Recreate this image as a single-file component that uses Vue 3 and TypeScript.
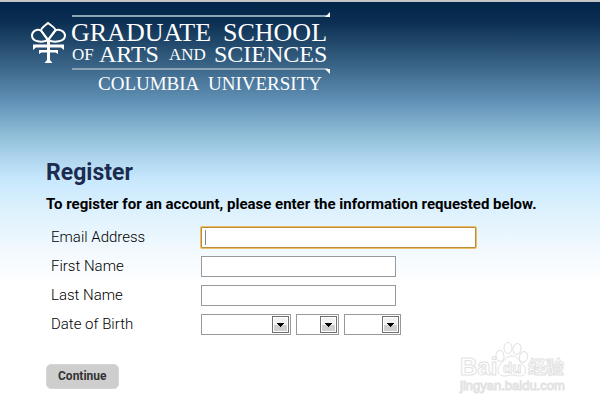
<script setup lang="ts">
import { ref } from 'vue'

interface DatePart {
  name: string
  size: string
  options: string[]
}

const email = ref('')
const firstName = ref('')
const lastName = ref('')

const range = (from: number, to: number): string[] =>
  Array.from({ length: to - from + 1 }, (_, i) => String(from + i))

const dateParts: DatePart[] = [
  { name: 'Month', size: 'month', options: range(1, 12) },
  { name: 'Day', size: 'day', options: range(1, 31) },
  { name: 'Year', size: 'year', options: range(1920, 2005) },
]
const birth = ref<string[]>(['', '', ''])
</script>

<template>
  <div class="page">
    <header class="banner">
      <svg class="logo" width="302" height="84" viewBox="30 12 302 84" role="img" aria-label="Graduate School of Arts and Sciences, Columbia University">
        <g class="crown">
          <path d="M48 40C42 43 32 42 32 35.500C32 31 37 28.500 41 30.500L48 40L55 30.500C59 28.500 65 31 65 35.500C65 42 54 43 48 40Z" />
          <path d="M41 30.500C41 28 45 25.500 48 23C51 25.500 56 28 55.500 30.500L48 40Z" />
        </g>
        <path class="solid" d="M33 44.500H64V50L61 47.500H50V50H58V54L55.500 52.500H50V60L52.500 63H44.500L47 60V52.500H41.500L39 54V50H47V47.500H36L33 50ZM47 39H50V45H47Z" />
        <path class="rule" d="M72 16H328M72 69H328" />
        <path class="solid" d="M330 12V17H325ZM325 69H330V74Z" />
        <g class="words">
          <text class="large" x="71" y="41">GRADUATE</text>
          <text class="large" x="223" y="41">SCHOOL</text>
          <text class="small" x="72" y="60">OF</text>
          <text class="medium" x="99" y="62">ARTS</text>
          <text class="small" x="169" y="60">AND</text>
          <text class="medium" x="214" y="62">SCIENCES</text>
          <text class="school" x="98" y="90">COLUMBIA</text>
          <text class="school" x="208" y="90">UNIVERSITY</text>
        </g>
      </svg>
    </header>

    <main>
      <h1>Register</h1>
      <p class="intro">To register for an account, please enter the information requested below.</p>
      <form @submit.prevent>
        <div class="row">
          <label for="email">Email Address</label>
          <input id="email" v-model="email" class="box active" type="text" />
        </div>
        <div class="row">
          <label for="first">First Name</label>
          <input id="first" v-model="firstName" class="box" type="text" />
        </div>
        <div class="row">
          <label for="last">Last Name</label>
          <input id="last" v-model="lastName" class="box" type="text" />
        </div>
        <div class="row">
          <label for="birth-0">Date of Birth</label>
          <div class="parts">
            <span v-for="(part, i) in dateParts" :key="part.name" class="picker" :class="part.size">
              <select :id="`birth-${i}`" v-model="birth[i]" :aria-label="part.name">
                <option value=""></option>
                <option v-for="o in part.options" :key="o" :value="o">{{ o }}</option>
              </select>
              <span class="arrow" aria-hidden="true">
                <svg width="7" height="4" viewBox="0 0 7 4" shape-rendering="crispEdges">
                  <path d="M0 0H7V1H6V2H5V3H4V4H3V3H2V2H1V1H0Z" />
                </svg>
              </span>
            </span>
          </div>
        </div>
        <button type="submit">Continue</button>
      </form>
    </main>

    <svg class="watermark" width="120" height="58" viewBox="456 340 120 58" aria-hidden="true">
      <g class="mark">
        <text class="brand" x="460" y="375">Bai</text>
        <ellipse cx="500" cy="356" rx="4" ry="5.500" transform="rotate(-10 500 356)" />
        <ellipse cx="508" cy="348" rx="4" ry="5.500" />
        <ellipse cx="517" cy="349" rx="4" ry="5.500" transform="rotate(12 517 349)" />
        <ellipse cx="523.500" cy="357" rx="4" ry="5.500" transform="rotate(15 523.500 357)" />
        <path d="M512 356C506 356 504 361 501 364C496 368 497 376 504 376C508 376 509 375 512 375C515 375 516 376 520 376C527 376 527 368 522 364C519 361 518 356 512 356Z" />
        <text class="du" x="503" y="373">du</text>
        <text class="cjk" x="528" y="374">经验</text>
        <text class="address" x="460" y="390">jingyan.baidu.com</text>
      </g>
    </svg>
  </div>
</template>

<style>
body {
  margin: 0;
  background: #fff;
}
</style>

<style scoped>
.page {
  position: relative;
  box-sizing: border-box;
  min-height: 100vh;
  border-top: 2px solid #c4c6c8;
  background: linear-gradient(#02244a 0, #0b2f52 20px, #2d5678 52px, #5f8fb4 98px, #8bbad5 130px, #a6cfe8 150px, #c6e7fd 176px, #daf0fd 204px, #f0f8fe 244px, #fff 282px) padding-box;
  color: #000;
  font: 300 15px/21px Roboto, "Liberation Sans", sans-serif;
}

.banner {
  padding: 10px 30px 0;
}

.logo {
  display: block;
}

.crown {
  fill: none;
  stroke: #fff;
  stroke-width: 2;
}

.solid,
.words {
  fill: #fff;
}

.rule {
  stroke: #8fa3b7;
  stroke-width: 2;
}

.words {
  font-family: "Liberation Serif", serif;
  font-weight: 400;
}

.large { font-size: 26px; }
.medium { font-size: 24px; }
.small { font-size: 17px; }
.school { font-size: 19px; }

main {
  padding: 61px 46px 18px;
}

h1 {
  margin: 0;
  color: #1c2b50;
  font-size: 23px;
  font-weight: 700;
  line-height: 32px;
}

.intro {
  margin: 5px 0 12px;
  font-weight: 700;
}

.row {
  display: flex;
  align-items: center;
  gap: 10px;
  margin-bottom: 8px;
  padding-left: 5px;
}

label {
  flex: none;
  width: 140px;
}

.box {
  box-sizing: border-box;
  width: 195px;
  height: 21px;
  padding: 1px 3px;
  border: 1px solid #999;
  background: #fff;
  font: inherit;
}

.active {
  width: 275px;
  border-color: #bd8c39;
  border-radius: 1px;
  outline: none;
  box-shadow: 0 0 0 1px #eabd68;
  background: linear-gradient(#888, #888) 3px 2px / 1px 15px no-repeat #fff;
}

.parts {
  display: flex;
  gap: 5px;
}

.picker {
  position: relative;
  height: 21px;
}

.month { width: 90px; }
.day { width: 43px; }
.year { width: 57px; }

select {
  display: block;
  width: 100%;
  height: 100%;
  padding: 0 20px 0 3px;
  border: 1px solid #999;
  border-radius: 0;
  appearance: none;
  background: #fff;
}

.arrow {
  position: absolute;
  top: 2px;
  right: 2px;
  display: grid;
  place-items: center;
  box-sizing: border-box;
  width: 17px;
  height: 17px;
  border: 1px solid #707070;
  background: linear-gradient(#f2f2f2 50%, #cfcfcf 50%);
  box-shadow: inset 0 0 0 1px #fff;
  pointer-events: none;
}

button {
  display: block;
  height: 25px;
  margin-top: 29px;
  padding: 0 11px;
  border: 1px solid #d6d6d6;
  border-radius: 5px;
  background: #cecece;
  color: #333;
  font: 700 12px/23px Roboto, "Liberation Sans", sans-serif;
}

.watermark {
  position: absolute;
  right: 24px;
  bottom: 9px;
}

.mark {
  fill: #fff;
  stroke: #e2e2e2;
  stroke-width: 1;
  font-family: "Liberation Sans", sans-serif;
  font-weight: 400;
}

.brand {
  font-size: 24px;
  font-weight: 700;
}

.du {
  font-size: 15px;
  font-weight: 700;
}

.cjk {
  font-family: "Noto Sans CJK SC", sans-serif;
  font-size: 18px;
  font-weight: 700;
}

.address {
  font-size: 13px;
}
</style>
